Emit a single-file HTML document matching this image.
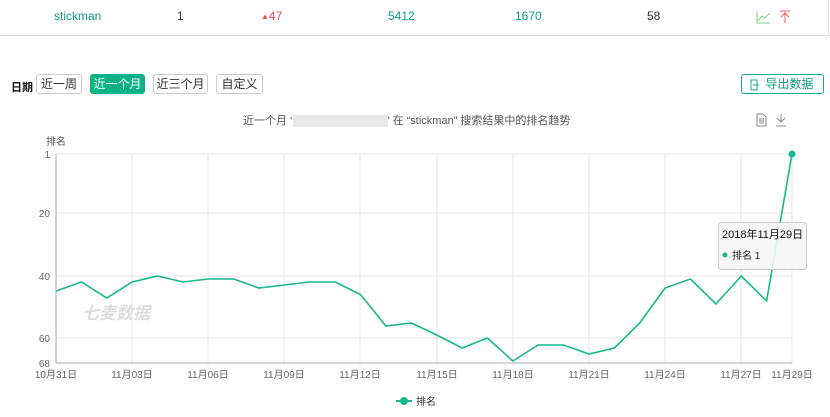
<!DOCTYPE html><html><head><meta charset="utf-8"><style>
*{margin:0;padding:0;box-sizing:border-box}
body{width:830px;height:417px;background:#fff;font-family:"Liberation Sans","Noto Sans CJK SC",sans-serif;position:relative;overflow:hidden;font-size:12px}
.a{position:absolute;white-space:nowrap}
.btn{position:absolute;top:74px;height:20px;border:1px solid #ccc;border-radius:3px;font-size:12px;line-height:18px;text-align:center;color:#333}
</style></head><body>
<div class="a" style="left:828px;top:0;width:1px;height:35px;background:#ddd"></div>
<div class="a" style="left:0;top:35px;width:830px;height:1px;background:#ddd"></div>
<div class="a" style="left:54px;top:9px;color:#0e9e7e">stickman</div>
<div class="a" style="left:177px;top:9px;color:#333">1</div>
<div class="a" style="left:261px;top:9px;color:#f04848"><span style="font-size:8px;vertical-align:1px">▲</span>47</div>
<div class="a" style="left:388px;top:9px;color:#0e9e7e">5412</div>
<div class="a" style="left:515px;top:9px;color:#0e9e7e">1670</div>
<div class="a" style="left:647px;top:9px;color:#333">58</div>
<svg class="a" style="left:756px;top:10px" width="40" height="14"><path d="M1 1V13H14M2 11L6 6L9 8L14 3" stroke="#7fd67f" fill="none" stroke-width="1"/><path d="M24 1H34M29 2V13M25 7L29 3L33 7" stroke="#f06060" fill="none" stroke-width="1"/></svg>
<div class="a" style="left:11px;top:79px;font-size:11px;font-weight:bold;color:#111">日期</div>
<div class="btn" style="left:36px;width:46px">近一周</div>
<div class="btn" style="left:90px;width:55px;background:#0bb386;border-color:#0bb386;color:#fff">近一个月</div>
<div class="btn" style="left:153px;width:55px">近三个月</div>
<div class="btn" style="left:216px;width:47px">自定义</div>
<div class="btn" style="left:741px;width:83px;border-color:#0bb386;color:#0e9e7e;padding-left:14px">导出数据</div>
<svg class="a" style="left:750px;top:79px" width="10" height="12"><path d="M1 1H7V11H1ZM3 6H9" stroke="#0bb386" fill="none"/></svg>
<div class="a" style="left:243px;top:112px;color:#555;font-size:11px">近一个月 ‘<span style="display:inline-block;width:95px;height:12px;background:#e8e8e8;vertical-align:middle"></span>’ 在 “stickman” 搜索结果中的排名趋势</div>
<svg class="a" style="left:756px;top:113px" width="34" height="14"><path d="M1 1H7L10 4V13H1ZM3 6H8M3 8H8M3 10H8" stroke="#888" fill="none"/><path d="M25 1V9M21 5L25 9L29 5M20 13H30" stroke="#888" fill="none"/></svg>
<div class="a" style="left:46px;top:133px;font-size:10px;color:#555">排名</div>
<svg class="a" style="left:0;top:140px" width="830" height="277" viewBox="0 140 830 277" font-family="Liberation Sans,Noto Sans CJK SC,sans-serif" font-size="10" fill="#666">
<g stroke="#e6e6e6"><path d="M56 154H792M56 213H792M56 276H792M56 338H792"/><path d="M132 154V363M208 154V363M284 154V363M360 154V363M437 154V363M513 154V363M589 154V363M665 154V363M741 154V363M792 154V363"/></g>
<path d="M56 154V363H792" stroke="#aab" fill="none"/>
<g text-anchor="end"><text x="50" y="158">1</text><text x="50" y="217">20</text><text x="50" y="280">40</text><text x="50" y="342">60</text><text x="50" y="367">68</text></g>
<g text-anchor="middle"><text x="56" y="378">10月31日</text><text x="132" y="378">11月03日</text><text x="208" y="378">11月06日</text><text x="284" y="378">11月09日</text><text x="360" y="378">11月12日</text><text x="437" y="378">11月15日</text><text x="513" y="378">11月18日</text><text x="589" y="378">11月21日</text><text x="665" y="378">11月24日</text><text x="741" y="378">11月27日</text><text x="792" y="378">11月29日</text></g>
<text x="82" y="319" font-size="17" font-style="italic" fill="#ddd" font-weight="bold">七麦数据</text>
<polyline fill="none" stroke="#17b88c" stroke-width="1.6" points="56,291 81.4,282 106.8,298 132.1,282 157.5,276 182.9,282 208.3,279 233.7,279 259,288 284.4,285 309.8,282 335.2,282 360.6,294.6 385.9,326 411.3,323 436.7,335 462.1,348 487.4,338 512.8,361 538.2,345 563.6,345 589,354 614.4,348 639.7,323 665.1,288 690.5,279 715.9,304 741.3,276 766.6,301 792,154"/>
<circle cx="792" cy="154" r="3.5" fill="#17b88c"/>
<rect x="718.5" y="222.5" width="88" height="47" rx="3" fill="#f6f6f6" fill-opacity="0.9" stroke="#ccc"/>
<text x="722" y="238" font-size="11" fill="#111">2018年11月29日</text>
<circle cx="725" cy="255" r="2.5" fill="#17b88c"/><text x="732" y="259" font-size="10" fill="#222">排名   1</text>
<path d="M396 401H412" stroke="#17b88c" stroke-width="2"/><circle cx="404" cy="401" r="4" fill="#17b88c"/>
<text x="416" y="405" fill="#333">排名</text>
</svg>
</body></html>
